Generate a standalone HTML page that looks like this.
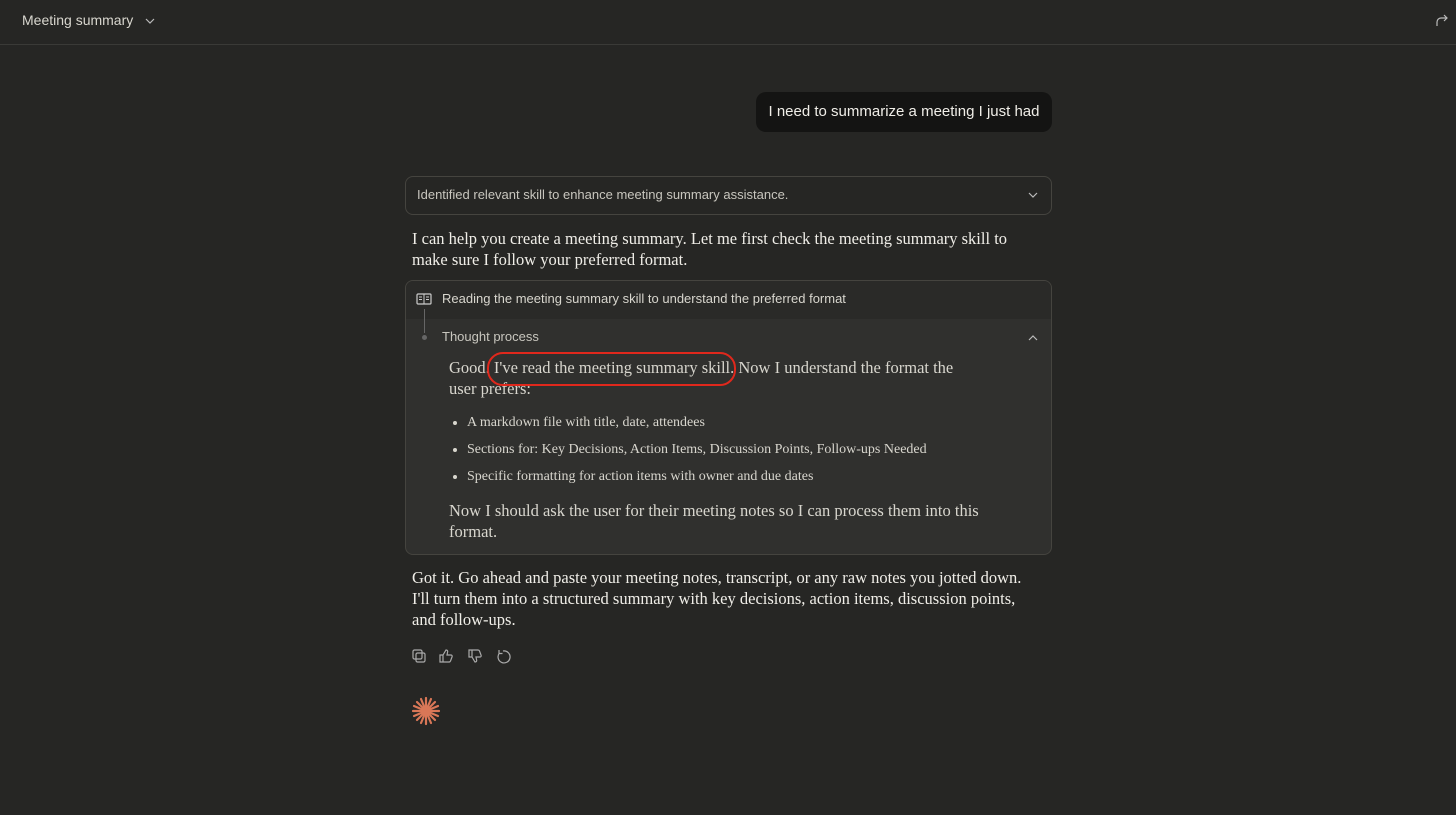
<!DOCTYPE html>
<html><head><meta charset="utf-8"><style>
body{margin:0;width:1456px;height:815px;background:#262624;font-family:"Liberation Sans",sans-serif;color:#e8e6df;position:relative;overflow:hidden}
.a{position:absolute}
.serif{font-family:"Liberation Serif",serif}
</style></head><body>
<div class="a" style="left:0;top:0;width:1456px;height:44px;border-bottom:1px solid #3a3a37"></div>
<div class="a" style="left:22px;top:12px;font-size:14px;color:#d8d6ce">Meeting summary</div>
<svg class="a" style="left:144px;top:15px" width="12" height="12" viewBox="0 0 12 12"><path d="M2 4l4 4 4-4" stroke="#bbb" fill="none" stroke-width="1.2"/></svg>
<svg class="a" style="left:1434px;top:12px" width="16" height="16" viewBox="0 0 16 16"><path d="M3 14v-4a4 4 0 0 1 4-4h6M10 3l3 3-3 3" stroke="#bbb" fill="none" stroke-width="1.2"/></svg>

<div class="a" style="left:756px;top:92px;width:296px;height:40px;background:#141413;border-radius:10px;font-size:15px;line-height:40px;text-align:center;color:#f0eee8">I need to summarize a meeting I just had</div>

<div class="a" style="left:405px;top:176px;width:645px;height:37px;border:1px solid #45443f;border-radius:8px"></div>
<div class="a" style="left:417px;top:187px;font-size:13px;color:#c8c6be">Identified relevant skill to enhance meeting summary assistance.</div>
<svg class="a" style="left:1027px;top:189px" width="12" height="12" viewBox="0 0 12 12"><path d="M2 4l4 4 4-4" stroke="#bbb" fill="none" stroke-width="1.2"/></svg>

<div class="a serif" style="left:412px;top:228px;width:615px;font-size:16.5px;line-height:21px;color:#f0eee8">I can help you create a meeting summary. Let me first check the meeting summary skill to make sure I follow your preferred format.</div>

<div class="a" style="left:405px;top:280px;width:645px;height:273px;border:1px solid #45443f;border-radius:8px;background:#30302e;overflow:hidden">
 <div style="height:38px;background:#2a2a28"></div>
</div>
<svg class="a" style="left:416px;top:292px" width="16" height="14" viewBox="0 0 16 14"><rect x="1" y="2" width="14" height="10" rx="1" stroke="#ccc" fill="none" stroke-width="1.2"/><path d="M8 2v10M3 5h3M3 7.5h3M10 5h3M10 7.5h3" stroke="#ccc" stroke-width="1"/></svg>
<div class="a" style="left:424px;top:309px;width:1px;height:24px;background:#666"></div>
<div class="a" style="left:422px;top:335px;width:5px;height:5px;border-radius:50%;background:#666"></div>
<div class="a" style="left:442px;top:291px;font-size:13px;color:#d8d6ce">Reading the meeting summary skill to understand the preferred format</div>
<div class="a" style="left:442px;top:329px;font-size:13px;color:#c8c6be">Thought process</div>
<svg class="a" style="left:1027px;top:332px" width="12" height="12" viewBox="0 0 12 12"><path d="M2 8l4-4 4 4" stroke="#bbb" fill="none" stroke-width="1.2"/></svg>
<div class="a serif" style="left:449px;top:357px;width:510px;font-size:16.5px;line-height:21px;color:#d8d6ce">Good. I've read the meeting summary skill. Now I understand the format the user prefers:</div>
<ul class="a serif" style="left:449px;top:409px;margin:0;padding-left:18px;font-size:14px;line-height:27px;color:#d8d6ce">
<li>A markdown file with title, date, attendees</li>
<li>Sections for: Key Decisions, Action Items, Discussion Points, Follow-ups Needed</li>
<li>Specific formatting for action items with owner and due dates</li></ul>
<div class="a serif" style="left:449px;top:500px;width:540px;font-size:16.5px;line-height:21px;color:#d8d6ce">Now I should ask the user for their meeting notes so I can process them into this format.</div>
<div class="a" style="left:487px;top:352px;width:245px;height:30px;border:2px solid #e0281c;border-radius:16px"></div>

<div class="a serif" style="left:412px;top:567px;width:615px;font-size:16.5px;line-height:21px;color:#f0eee8">Got it. Go ahead and paste your meeting notes, transcript, or any raw notes you jotted down. I'll turn them into a structured summary with key decisions, action items, discussion points, and follow-ups.</div>

<svg class="a" style="left:412px;top:648px" width="110" height="16" viewBox="0 0 110 16" fill="none" stroke="#aaa" stroke-width="1.2">
<rect x="1" y="2" width="9" height="9" rx="1.5"/><rect x="4" y="5" width="9" height="9" rx="1.5"/>
<path d="M31 7v7h-3V7zM31 7l3-5c1.5 0 2 1 1.5 2.5L35 7h4c1 0 1.5 1 1 2l-1.5 4c-.3.7-.8 1-1.5 1H31"/>
<path d="M60 9V2h-3v7zM60 9l3 5c1.5 0 2-1 1.5-2.5L64 9h4c1 0 1.5-1 1-2l-1.5-4c-.3-.7-.8-1-1.5-1H60"/>
<path d="M91 3a6 6 0 1 1-3.5 2M87 2v3.5h3.5"/></svg>
<svg class="a" style="left:411px;top:696px" width="30" height="30" viewBox="-15 -15 30 30" stroke="#d97757" stroke-width="2.2" stroke-linecap="round">
<g><line x1="0" y1="-13" x2="0" y2="13"/><line x1="-13" y1="0" x2="13" y2="0"/><line x1="-9" y1="-9" x2="9" y2="9"/><line x1="-9" y1="9" x2="9" y2="-9"/><line x1="-5" y1="-12" x2="5" y2="12"/><line x1="5" y1="-12" x2="-5" y2="12"/><line x1="-12" y1="-5" x2="12" y2="5"/><line x1="-12" y1="5" x2="12" y2="-5"/></g></svg>
</body></html>
